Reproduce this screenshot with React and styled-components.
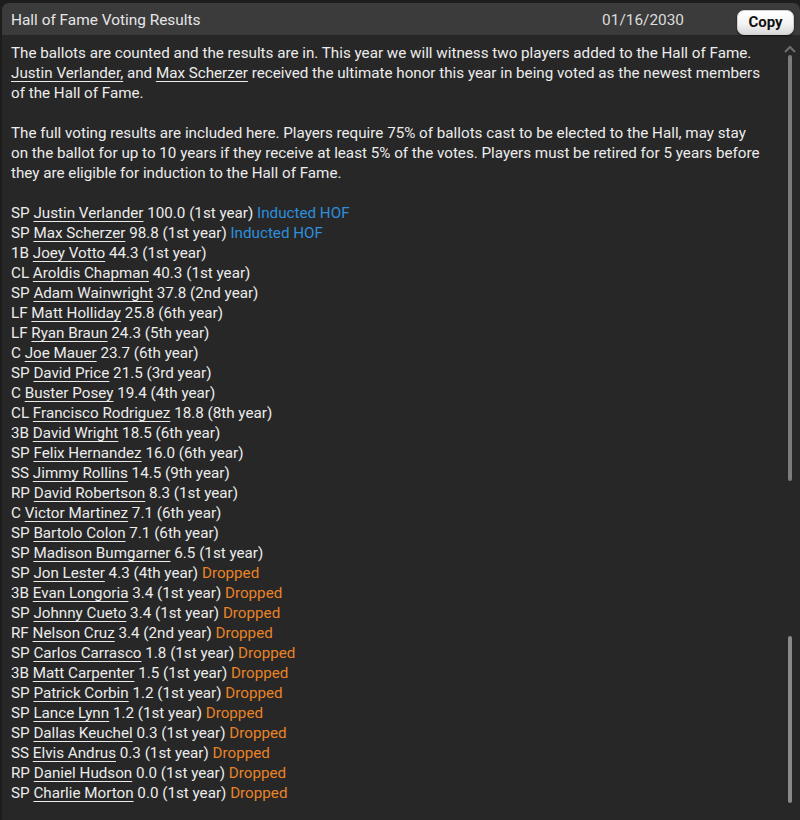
import React from "react";
import styled, { createGlobalStyle } from "styled-components";

const Global = createGlobalStyle`
  html, body { margin: 0; padding: 0; background: #1d1d1d; }
  body { font-family: Roboto, "Liberation Sans", sans-serif; }
`;

const Window = styled.div`
  width: 798px;
  height: 817px;
  margin: 3px 0 0 2px;
  display: flex;
  flex-direction: column;
  background: #272727;
  border-radius: 7px 7px 0 0;
  overflow: hidden;
`;

const Header = styled.div`
  height: 32px;
  flex: none;
  display: flex;
  align-items: center;
  padding: 0 6px 0 9px;
  background: #3b3b3b;
  color: #e6e6e6;
  font-size: 15.4px;
`;

const Title = styled.div`
  flex: 1;
  margin-top: 1px;
`;

const DateText = styled.div`
  margin-right: 53px;
  margin-top: 1px;
  color: #dcdcdc;
`;

const CopyButton = styled.button`
  width: 57px;
  height: 25px;
  margin-top: 6px;
  border: 1px solid #d0d0d0;
  border-radius: 7px;
  background: linear-gradient(#ffffff 0%, #f4f4f4 55%, #d8d8d8 100%);
  box-shadow: 0 1px 2px rgba(0, 0, 0, 0.6);
  font-family: Roboto, "Liberation Sans", sans-serif;
  font-size: 15px;
  font-weight: 700;
  color: #111;
  padding: 0;
`;

const Body = styled.div`
  flex: 1;
  display: flex;
  min-height: 0;
`;

const Content = styled.div`
  flex: 1;
  padding: 8px 0 0 9px;
  color: #ececec;
  font-size: 15.2px;
  line-height: 20px;
`;

const Para = styled.p`
  margin: 0 0 20px;
`;

const Name = styled.span`
  text-decoration: underline;
  text-underline-offset: 3px;
  text-decoration-thickness: 1px;
`;

const Row = styled.div`
  white-space: nowrap;
`;

const Status = styled.span`
  color: ${(p) => (p.$kind === "hof" ? "#2d8fde" : "#e98326")};
`;

const Scroll = styled.div`
  width: 14px;
  flex: none;
  display: flex;
  flex-direction: column;
  align-items: center;
  padding-top: 10px;
  margin-right: 3px;
`;

const Arrow = styled.svg`
  width: 12px;
  height: 8px;
  flex: none;
`;

const Thumb = styled.div`
  width: 4px;
  border-radius: 2px;
  background: ${(p) => p.$c};
  height: ${(p) => p.$h}px;
  margin-top: ${(p) => p.$mt}px;
  flex: none;
`;

const players = [
  ["SP", "Justin Verlander", "100.0", "1st", "hof"],
  ["SP", "Max Scherzer", "98.8", "1st", "hof"],
  ["1B", "Joey Votto", "44.3", "1st"],
  ["CL", "Aroldis Chapman", "40.3", "1st"],
  ["SP", "Adam Wainwright", "37.8", "2nd"],
  ["LF", "Matt Holliday", "25.8", "6th"],
  ["LF", "Ryan Braun", "24.3", "5th"],
  ["C", "Joe Mauer", "23.7", "6th"],
  ["SP", "David Price", "21.5", "3rd"],
  ["C", "Buster Posey", "19.4", "4th"],
  ["CL", "Francisco Rodriguez", "18.8", "8th"],
  ["3B", "David Wright", "18.5", "6th"],
  ["SP", "Felix Hernandez", "16.0", "6th"],
  ["SS", "Jimmy Rollins", "14.5", "9th"],
  ["RP", "David Robertson", "8.3", "1st"],
  ["C", "Victor Martinez", "7.1", "6th"],
  ["SP", "Bartolo Colon", "7.1", "6th"],
  ["SP", "Madison Bumgarner", "6.5", "1st"],
  ["SP", "Jon Lester", "4.3", "4th", "drop"],
  ["3B", "Evan Longoria", "3.4", "1st", "drop"],
  ["SP", "Johnny Cueto", "3.4", "1st", "drop"],
  ["RF", "Nelson Cruz", "3.4", "2nd", "drop"],
  ["SP", "Carlos Carrasco", "1.8", "1st", "drop"],
  ["3B", "Matt Carpenter", "1.5", "1st", "drop"],
  ["SP", "Patrick Corbin", "1.2", "1st", "drop"],
  ["SP", "Lance Lynn", "1.2", "1st", "drop"],
  ["SP", "Dallas Keuchel", "0.3", "1st", "drop"],
  ["SS", "Elvis Andrus", "0.3", "1st", "drop"],
  ["RP", "Daniel Hudson", "0.0", "1st", "drop"],
  ["SP", "Charlie Morton", "0.0", "1st", "drop"],
];

export default function App() {
  return (
    <>
      <Global />
      <Window>
        <Header>
          <Title>Hall of Fame Voting Results</Title>
          <DateText>01/16/2030</DateText>
          <CopyButton>Copy</CopyButton>
        </Header>
        <Body>
          <Content>
            <Para>
              The ballots are counted and the results are in. This year we will witness two players added to the Hall of Fame.
              <br />
              <Name>Justin Verlander,</Name> and <Name>Max Scherzer</Name> received the ultimate honor this year in being voted as the newest members
              <br />
              of the Hall of Fame.
            </Para>
            <Para>
              The full voting results are included here. Players require 75% of ballots cast to be elected to the Hall, may stay
              <br />
              on the ballot for up to 10 years if they receive at least 5% of the votes. Players must be retired for 5 years before
              <br />
              they are eligible for induction to the Hall of Fame.
            </Para>
            {players.map(([pos, name, pct, yr, st]) => (
              <Row key={name}>
                {pos} <Name>{name}</Name> {pct} ({yr} year)
                {st === "hof" && <> <Status $kind="hof">Inducted HOF</Status></>}
                {st === "drop" && <> <Status $kind="drop">Dropped</Status></>}
              </Row>
            ))}
          </Content>
          <Scroll>
            <Arrow viewBox="0 0 12 8">
              <path d="M1 7 L6 2 L11 7" fill="none" stroke="#6e6e6e" strokeWidth="2" />
            </Arrow>
            <Thumb $c="#7c7c7c" $h={426} $mt={2} />
            <Thumb $c="#8a8a8a" $h={167} $mt={155} />
          </Scroll>
        </Body>
      </Window>
    </>
  );
}
